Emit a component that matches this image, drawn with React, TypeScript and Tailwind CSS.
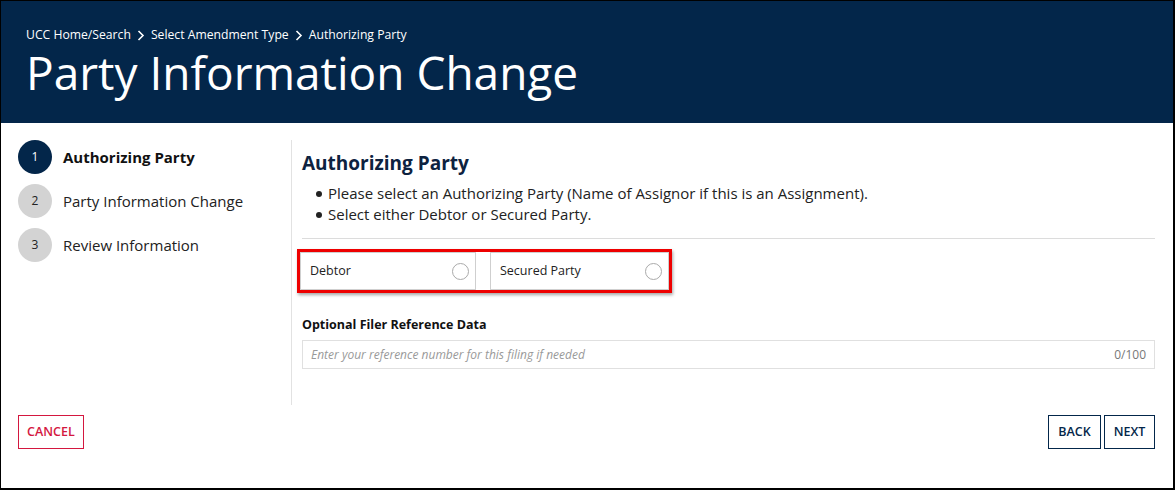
import React from "react";

const font = { fontFamily: '"Open Sans", "Noto Sans", sans-serif' };

function Chevron() {
  return (
    <svg width="8" height="11" viewBox="0 0 8 11" className="mx-[6px] inline-block">
      <path d="M1.5 1 L6 5.5 L1.5 10" fill="none" stroke="white" strokeWidth="1.6" />
    </svg>
  );
}

function Step({ n, label, active }: { n: number; label: string; active?: boolean }) {
  return (
    <div className="flex items-center h-[44px]">
      <div
        className={
          active
            ? "w-[34px] h-[34px] rounded-full bg-[#03264a] text-white text-[12px] flex items-center justify-center"
            : "w-[34px] h-[34px] rounded-full bg-[#d3d3d3] text-[#222] text-[12px] flex items-center justify-center"
        }
      >
        {n}
      </div>
      <span
        className={
          active
            ? "ml-[11px] text-[15px] font-bold text-[#111]"
            : "ml-[11px] text-[15px] text-[#222]"
        }
      >
        {label}
      </span>
    </div>
  );
}

function Radio() {
  return <div className="w-[17px] h-[17px] rounded-full border border-[#aaa] bg-white" />;
}

export default function App() {
  return (
    <div
      style={font}
      className="w-[1175px] h-[490px] bg-white border-l border-t border-r-2 border-b-2 border-black flex flex-col overflow-hidden"
    >
      <header className="h-[122px] bg-[#03264a] pl-[25px] pt-[25px] text-white shrink-0">
        <div className="flex items-center text-[12.2px] leading-[18px]">
          <span>UCC Home/Search</span>
          <Chevron />
          <span>Select Amendment Type</span>
          <Chevron />
          <span>Authorizing Party</span>
        </div>
        <h1 className="text-[46px] leading-[56px] mt-0 font-normal">Party Information Change</h1>
      </header>

      <div className="flex h-[282px] pt-[17px]">
        <aside className="w-[290px] pl-[17px] flex flex-col gap-0 mt-[-5px]">
          <Step n={1} label="Authorizing Party" active />
          <Step n={2} label="Party Information Change" />
          <Step n={3} label="Review Information" />
        </aside>
        <div className="w-px bg-[#e2e2e2]" />
        <main className="flex-1 pl-[10px] pr-[18px]">
          <h2 className="text-[19px] font-bold text-[#0d2240] mt-[10px] leading-[26px]">Authorizing Party</h2>
          <ul className="mt-[7px] pl-[12px] text-[15px] text-[#222] leading-[21px]">
            <li className="flex items-center">
              <span className="w-[6px] h-[6px] rounded-full bg-[#222] ml-[2px] mr-[6px]" />
              <span>Please select an Authorizing Party (Name of Assignor if this is an Assignment).</span>
            </li>
            <li className="flex items-center">
              <span className="w-[6px] h-[6px] rounded-full bg-[#222] ml-[2px] mr-[6px]" />
              <span>Select either Debtor or Secured Party.</span>
            </li>
          </ul>
          <div className="mt-[13px] h-px bg-[#dcdcdc]" />
          <div className="mt-[10px] ml-[-5px] w-[375px] h-[44px] border-[3px] border-[#ee0000] flex items-stretch shadow-[1px_2px_3px_rgba(0,0,0,0.35)]">
            <div className="w-[176px] border border-[#cfcfcf] flex items-center justify-between pl-[9px] pr-[6px] text-[12.5px] text-[#222]">
              <span>Debtor</span>
              <Radio />
            </div>
            <div className="w-[14px]" />
            <div className="flex-1 border border-[#cfcfcf] flex items-center justify-between pl-[9px] pr-[6px] text-[12.5px] text-[#222]">
              <span>Secured Party</span>
              <Radio />
            </div>
          </div>
          <div className="mt-[23px] text-[12.5px] font-bold text-[#111] leading-[18px]">Optional Filer Reference Data</div>
          <div className="mt-[6px] h-[29px] border border-[#e0e0e0] flex items-center justify-between pl-[8px] pr-[8px] text-[12px]">
            <span className="italic text-[#999]">Enter your reference number for this filing if needed</span>
            <span className="text-[#777]">0/100</span>
          </div>
        </main>
      </div>

      <footer className="flex-1 flex items-start justify-between pl-[17px] pr-[18px] pt-[10px]">
        <button className="h-[34px] px-[8px] border border-[#d4173f] text-[#d4173f] text-[12.5px] font-semibold">
          CANCEL
        </button>
        <div className="flex gap-[3px]">
          <button className="h-[34px] w-[53px] border border-[#03264a] text-[#03264a] text-[12.5px] font-semibold">
            BACK
          </button>
          <button className="h-[34px] w-[51px] border border-[#03264a] text-[#03264a] text-[12.5px] font-semibold">
            NEXT
          </button>
        </div>
      </footer>
    </div>
  );
}
